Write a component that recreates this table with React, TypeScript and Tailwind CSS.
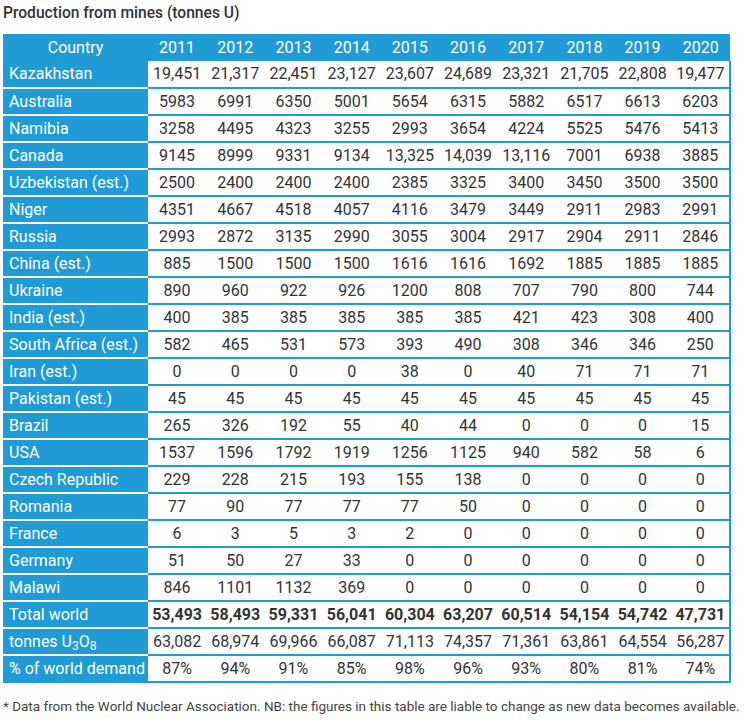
import React from 'react';

const years = ['2011', '2012', '2013', '2014', '2015', '2016', '2017', '2018', '2019', '2020'];

const rows: [string, string[]][] = [
  ['Kazakhstan', ['19,451', '21,317', '22,451', '23,127', '23,607', '24,689', '23,321', '21,705', '22,808', '19,477']],
  ['Australia', ['5983', '6991', '6350', '5001', '5654', '6315', '5882', '6517', '6613', '6203']],
  ['Namibia', ['3258', '4495', '4323', '3255', '2993', '3654', '4224', '5525', '5476', '5413']],
  ['Canada', ['9145', '8999', '9331', '9134', '13,325', '14,039', '13,116', '7001', '6938', '3885']],
  ['Uzbekistan (est.)', ['2500', '2400', '2400', '2400', '2385', '3325', '3400', '3450', '3500', '3500']],
  ['Niger', ['4351', '4667', '4518', '4057', '4116', '3479', '3449', '2911', '2983', '2991']],
  ['Russia', ['2993', '2872', '3135', '2990', '3055', '3004', '2917', '2904', '2911', '2846']],
  ['China (est.)', ['885', '1500', '1500', '1500', '1616', '1616', '1692', '1885', '1885', '1885']],
  ['Ukraine', ['890', '960', '922', '926', '1200', '808', '707', '790', '800', '744']],
  ['India (est.)', ['400', '385', '385', '385', '385', '385', '421', '423', '308', '400']],
  ['South Africa (est.)', ['582', '465', '531', '573', '393', '490', '308', '346', '346', '250']],
  ['Iran (est.)', ['0', '0', '0', '0', '38', '0', '40', '71', '71', '71']],
  ['Pakistan (est.)', ['45', '45', '45', '45', '45', '45', '45', '45', '45', '45']],
  ['Brazil', ['265', '326', '192', '55', '40', '44', '0', '0', '0', '15']],
  ['USA', ['1537', '1596', '1792', '1919', '1256', '1125', '940', '582', '58', '6']],
  ['Czech Republic', ['229', '228', '215', '193', '155', '138', '0', '0', '0', '0']],
  ['Romania', ['77', '90', '77', '77', '77', '50', '0', '0', '0', '0']],
  ['France', ['6', '3', '5', '3', '2', '0', '0', '0', '0', '0']],
  ['Germany', ['51', '50', '27', '33', '0', '0', '0', '0', '0', '0']],
  ['Malawi', ['846', '1101', '1132', '369', '0', '0', '0', '0', '0', '0']],
];

const totals = ['53,493', '58,493', '59,331', '56,041', '60,304', '63,207', '60,514', '54,154', '54,742', '47,731'];
const u3o8 = ['63,082', '68,974', '69,966', '66,087', '71,113', '74,357', '71,361', '63,861', '64,554', '56,287'];
const demand = ['87%', '94%', '91%', '85%', '98%', '96%', '93%', '80%', '81%', '74%'];

function DataRow({ label, values, bold, last }: { label: React.ReactNode; values: string[]; bold?: boolean; last?: boolean }) {
  return (
    <tr className="h-[27px]">
      <td className={`bg-[#219bd6] text-white pl-[6px] border-b-2 ${last ? 'border-[#219bd6]' : 'border-white'}`}>
        {label}
      </td>
      {values.map((v, i) => (
        <td
          key={i}
          className={`text-center text-[#333] border-b-2 border-[#219bd6] ${i === values.length - 1 ? 'border-r-2' : ''} ${bold ? 'font-bold' : ''}`}
        >
          {v}
        </td>
      ))}
    </tr>
  );
}

export default function App() {
  return (
    <div className="bg-white w-[753px] h-[721px] pl-[3px] pt-[4px] font-['Roboto',sans-serif]">
      <h2 className="text-[15.6px] font-medium text-[#333] leading-[18px]">Production from mines (tonnes U)</h2>
      <table className="mt-[12px] w-[728px] table-fixed border-collapse text-[16px] leading-[20px]">
        <colgroup>
          <col className="w-[145px]" />
          {years.map((y) => (
            <col key={y} />
          ))}
        </colgroup>
        <thead>
          <tr className="h-[27px] bg-[#219bd6] text-white">
            <th className="font-normal text-center">Country</th>
            {years.map((y) => (
              <th key={y} className="font-normal text-center">
                {y}
              </th>
            ))}
          </tr>
        </thead>
        <tbody>
          {rows.map(([name, vals]) => (
            <DataRow key={name} label={name} values={vals} />
          ))}
          <DataRow label="Total world" values={totals} bold />
          <DataRow
            label={
              <>
                tonnes U<sub>3</sub>O<sub>8</sub>
              </>
            }
            values={u3o8}
          />
          <DataRow label="% of world demand" values={demand} last />
        </tbody>
      </table>
      <p className="mt-[14px] text-[13.5px] text-[#444] leading-[18px] whitespace-nowrap">
        * Data from the World Nuclear Association. NB: the figures in this table are liable to change as new data becomes available.
      </p>
    </div>
  );
}
